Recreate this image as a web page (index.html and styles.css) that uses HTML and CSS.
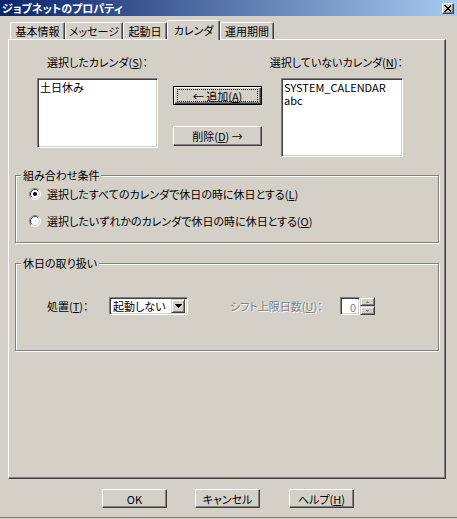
FILE: index.html
```html
<!DOCTYPE html>
<html lang="ja">
<head>
<meta charset="utf-8">
<title>ジョブネットのプロパティ</title>
<link rel="stylesheet" href="styles.css">
</head>
<body>
<div class="win">
  <div class="title">
    <span class="title-text">ジョブネットのプロパティ</span>
    <span class="close"><svg width="8" height="7" viewBox="0 0 8 7" shape-rendering="crispEdges"><path d="M0.5 0.5 L7 6.5 M7 0.5 L0.5 6.5" stroke="#000" stroke-width="1.4" fill="none"/></svg></span>
  </div>
  <div class="tabs">
    <div class="tab t1">基本情報</div>
    <div class="tab t2">メッセージ</div>
    <div class="tab t3">起動日</div>
    <div class="tab t4 sel">カレンダ</div>
    <div class="tab t5">運用期間</div>
  </div>
  <div class="panel">
    <div class="pick">
      <div class="col colL">
        <div class="lbl">選択したカレンダ(<u>S</u>)：</div>
        <div class="list listL"><div class="item">土日休み</div></div>
      </div>
      <div class="col colM">
        <div class="btn def"><span class="focus">← 追加(<u>A</u>)</span></div>
        <div class="btn del">削除(<u>D</u>) →</div>
      </div>
      <div class="col colR">
        <div class="lbl lblR">選択していないカレンダ(<u>N</u>)：</div>
        <div class="list listR"><div class="item">SYSTEM_CALENDAR</div><div class="item">abc</div></div>
      </div>
    </div>
    <div class="group g1">
      <span class="legend">組み合わせ条件</span>
      <div class="rrow">
        <svg class="radio" width="12" height="12" viewBox="0 0 12 12"><circle cx="6" cy="6" r="5" fill="#fff"/><path d="M2.11 9.89 A5.5 5.5 0 0 1 9.89 2.11" stroke="#808080" fill="none"/><path d="M9.89 2.11 A5.5 5.5 0 0 1 2.11 9.89" stroke="#fff" fill="none"/><path d="M2.82 9.18 A4.5 4.5 0 0 1 9.18 2.82" stroke="#404040" fill="none"/><path d="M9.18 2.82 A4.5 4.5 0 0 1 2.82 9.18" stroke="#d4d0c8" fill="none"/><circle cx="6" cy="6" r="2" fill="#000"/></svg>
        <span>選択したすべてのカレンダで休日の時に休日とする(<u>L</u>)</span>
      </div>
      <div class="rrow">
        <svg class="radio" width="12" height="12" viewBox="0 0 12 12"><circle cx="6" cy="6" r="5" fill="#fff"/><path d="M2.11 9.89 A5.5 5.5 0 0 1 9.89 2.11" stroke="#808080" fill="none"/><path d="M9.89 2.11 A5.5 5.5 0 0 1 2.11 9.89" stroke="#fff" fill="none"/><path d="M2.82 9.18 A4.5 4.5 0 0 1 9.18 2.82" stroke="#404040" fill="none"/><path d="M9.18 2.82 A4.5 4.5 0 0 1 2.82 9.18" stroke="#d4d0c8" fill="none"/></svg>
        <span>選択したいずれかのカレンダで休日の時に休日とする(<u>O</u>)</span>
      </div>
    </div>
    <div class="group g2">
      <span class="legend">休日の取り扱い</span>
      <div class="hrow">
        <span class="lab">処置(<u>T</u>)：</span>
        <div class="combo">
          <span class="ctext">起動しない</span>
          <span class="dd"><svg width="7" height="4" viewBox="0 0 7 4" shape-rendering="crispEdges"><path d="M0 0h7v1H0zM1 1h5v1H1zM2 2h3v1H2zM3 3h1v1H3z" fill="#000"/></svg></span>
        </div>
        <span class="lab2">シフト上限日数(<u>U</u>)：</span>
        <div class="spin">
          <div class="edit">0</div>
          <div class="spbtns">
            <span class="sb"><svg width="3" height="2" viewBox="0 0 3 2" shape-rendering="crispEdges"><path d="M1 0h1v1H1zM0 1h3v1H0z" fill="#808080"/></svg></span>
            <span class="sb"><svg width="3" height="2" viewBox="0 0 3 2" shape-rendering="crispEdges"><path d="M0 0h3v1H0zM1 1h1v1H1z" fill="#808080"/></svg></span>
          </div>
        </div>
      </div>
    </div>
  </div>
  <div class="btnrow">
    <div class="btn b">OK</div>
    <div class="btn b b2">キャンセル</div>
    <div class="btn b b3">ヘルプ(<u>H</u>)</div>
  </div>
</div>
</body>
</html>
```

FILE: styles.css
```css
html, body {
  margin: 0;
  padding: 0;
}
body {
  background: #d4d0c8;
  font-family: "Noto Sans CJK JP", "Noto Sans", sans-serif;
  font-size: 11px;
  line-height: 12px;
  color: #000;
  font-feature-settings: "palt";
}
u {
  text-decoration: underline;
  text-underline-offset: 1px;
}
.win {
  width: 457px;
  height: 518px;
  box-sizing: border-box;
  border-bottom: 1px solid #808080;
}
.title {
  height: 16px;
  background: linear-gradient(to right, #0a246a, #a6caf0);
  display: flex;
  align-items: center;
  justify-content: space-between;
  padding: 0 3px 0 2px;
}
.title-text {
  color: #fff;
  font-weight: bold;
  font-size: 11px;
  line-height: 12px;
}
.close {
  width: 12px;
  height: 11px;
  box-sizing: border-box;
  background: #d4d0c8;
  border: 1px solid;
  border-color: #fff #404040 #404040 #fff;
  box-shadow: inset -1px -1px #808080;
  display: flex;
  align-items: center;
  justify-content: center;
}
.tabs {
  margin-top: 4px;
  height: 19px;
  display: flex;
  align-items: flex-end;
  padding-left: 10px;
}
.tab {
  height: 17px;
  box-sizing: border-box;
  border: 1px solid;
  border-bottom: 0;
  border-color: #fff #404040 transparent #fff;
  box-shadow: inset -1px 0 #808080;
  border-radius: 2px 2px 0 0;
  display: flex;
  align-items: center;
  justify-content: center;
  white-space: nowrap;
  background: #d4d0c8;
}
.t1 { width: 55px; }
.t2 { width: 58px; }
.t3 { width: 44px; }
.t4 { width: 53px; }
.t5 { width: 54px; }
.sel {
  height: 20px;
  margin-bottom: -1px;
  position: relative;
  z-index: 1;
  padding-bottom: 2px;
}
.panel {
  width: 438px;
  height: 440px;
  margin-left: 8px;
  box-sizing: border-box;
  border: 1px solid;
  border-color: #fff #404040 #404040 #fff;
  box-shadow: inset -1px -1px #808080;
  padding-top: 16px;
}
.pick {
  display: flex;
  padding-left: 28px;
}
.colL { width: 121px; }
.colM {
  width: 89px;
  margin-left: 15px;
  padding-top: 30px;
}
.colR {
  width: 122px;
  margin-left: 19px;
}
.lbl {
  height: 12px;
  display: flex;
  justify-content: center;
  white-space: nowrap;
  margin-bottom: 10px;
}
.lblR { justify-content: flex-end; }
.list {
  background: #fff;
  box-sizing: border-box;
  border: 1px solid;
  border-color: #808080 #fff #fff #808080;
  box-shadow: inset 1px 1px #404040, inset -1px -1px #d4d0c8;
  padding: 2px 2px;
}
.listL { height: 70px; }
.listR { height: 79px; }
.item {
  height: 13px;
  line-height: 13px;
  white-space: nowrap;
}
.btn {
  box-sizing: border-box;
  background: #d4d0c8;
  border: 1px solid;
  border-color: #fff #404040 #404040 #fff;
  box-shadow: inset -1px -1px #808080;
  display: flex;
  align-items: center;
  justify-content: center;
  white-space: nowrap;
}
.def {
  height: 19px;
  border-color: #000;
  box-shadow: inset 1px 1px #fff, inset -1px -1px #404040, inset -2px -2px #808080;
  padding: 2px 3px;
}
.focus {
  flex: 1;
  align-self: stretch;
  border: 1px dotted #000;
  display: flex;
  align-items: center;
  justify-content: center;
}
.del {
  height: 20px;
  margin-top: 21px;
}
.group {
  position: relative;
  margin-left: 6px;
  width: 424px;
  box-sizing: border-box;
  border: 1px solid #808080;
  box-shadow: inset 1px 1px #fff, 1px 1px #fff;
}
.legend {
  position: absolute;
  top: -7px;
  left: 5px;
  padding: 0 2px;
  background: #d4d0c8;
  line-height: 12px;
  white-space: nowrap;
}
.g1 {
  margin-top: 18px;
  height: 68px;
  padding: 11px 0 0 13px;
}
.rrow {
  display: flex;
  align-items: center;
  height: 13px;
  white-space: nowrap;
}
.rrow + .rrow { margin-top: 14px; }
.radio {
  display: block;
  margin-right: 6px;
  flex: none;
}
.g2 {
  margin-top: 20px;
  height: 88px;
  padding: 33px 0 0 31px;
}
.hrow {
  display: flex;
  align-items: center;
  height: 18px;
}
.lab {
  width: 62px;
  white-space: nowrap;
}
.combo {
  width: 79px;
  height: 18px;
  box-sizing: border-box;
  background: #fff;
  border: 1px solid;
  border-color: #808080 #fff #fff #808080;
  box-shadow: inset 1px 1px #404040, inset -1px -1px #d4d0c8;
  padding: 2px;
  display: flex;
  align-items: center;
}
.ctext {
  flex: 1;
  padding-left: 1px;
  white-space: nowrap;
}
.dd {
  width: 14px;
  height: 14px;
  box-sizing: border-box;
  background: #d4d0c8;
  border: 1px solid;
  border-color: #d4d0c8 #404040 #404040 #d4d0c8;
  box-shadow: inset 1px 1px #fff, inset -1px -1px #808080;
  display: flex;
  align-items: center;
  justify-content: center;
}
.lab2 {
  width: 110px;
  margin-left: 42px;
  white-space: nowrap;
  color: #808080;
  text-shadow: 1px 1px 0 #fff;
}
.spin {
  display: flex;
  height: 18px;
}
.edit {
  width: 20px;
  height: 18px;
  box-sizing: border-box;
  background: #fff;
  border: 1px solid;
  border-color: #808080 #fff #fff #808080;
  box-shadow: inset 1px 1px #404040, inset -1px -1px #d4d0c8;
  color: #808080;
  text-align: right;
  padding: 3px 3px 0 0;
}
.spbtns {
  width: 15px;
  display: flex;
  flex-direction: column;
}
.sb {
  height: 9px;
  box-sizing: border-box;
  background: #d4d0c8;
  border: 1px solid;
  border-color: #d4d0c8 #404040 #404040 #d4d0c8;
  box-shadow: inset 1px 1px #fff, inset -1px -1px #808080;
  display: flex;
  align-items: center;
  justify-content: center;
}
.btnrow {
  display: flex;
  margin-top: 10px;
  padding-left: 102px;
}
.b {
  width: 65px;
  height: 19px;
}
.b2 { margin-left: 28px; }
.b3 { margin-left: 29px; }
```
